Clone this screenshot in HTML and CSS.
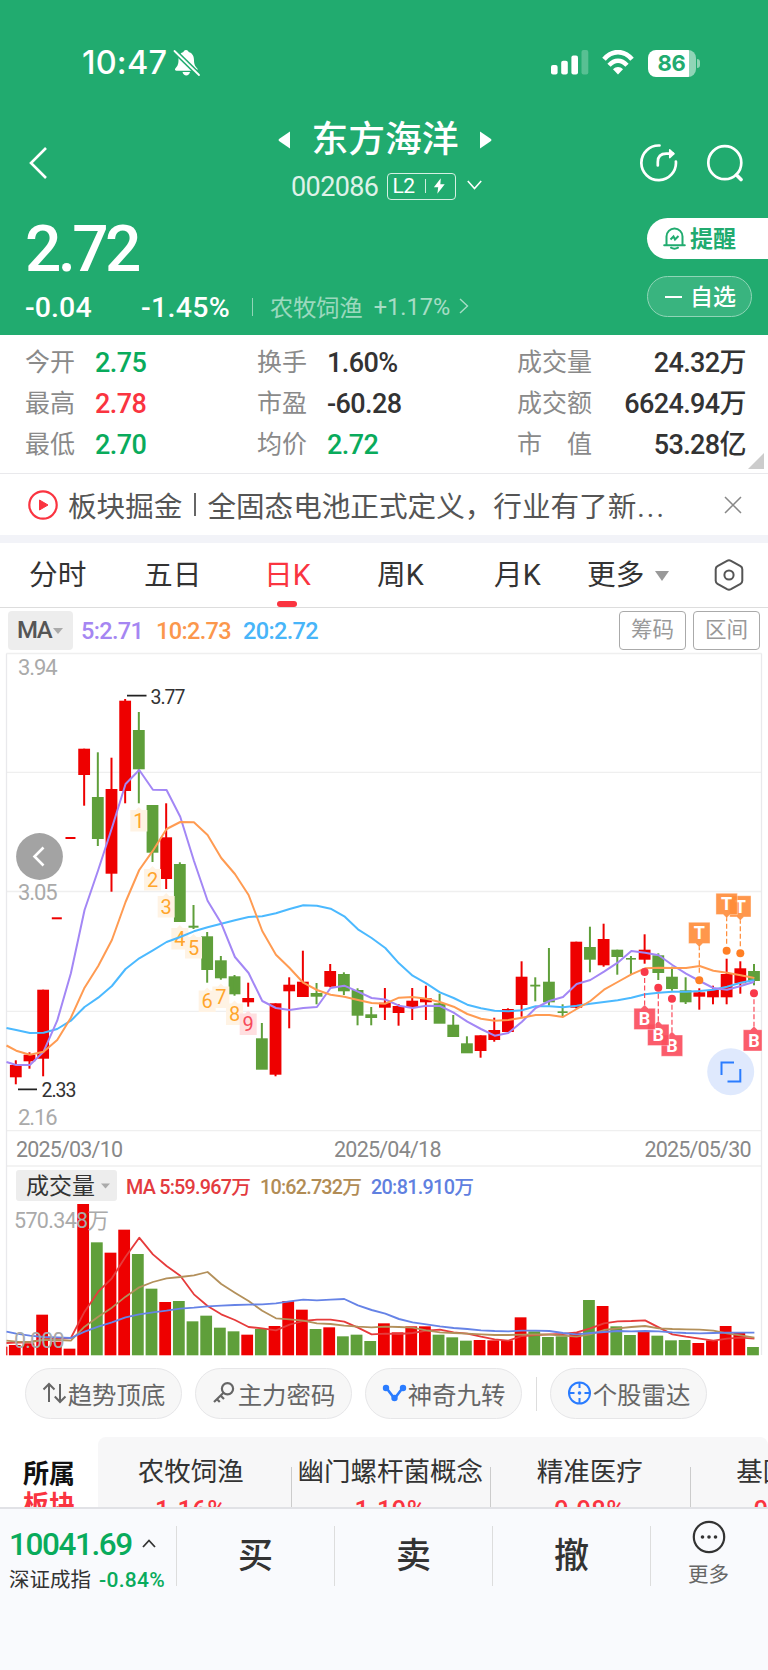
FILE: index.html
```html
<!DOCTYPE html>
<html lang="zh-CN">
<head>
<meta charset="utf-8">
<title>东方海洋 002086</title>
<link rel="stylesheet" href="styles.css">
</head>
<body>
<div class="app">
  <header class="hero">
    <div class="status">
      <span class="clock">10:47</span>
      <svg class="mute" width="28" height="28" viewBox="0 0 28 28"><path d="M13 1c1.600 0 2.500 1 2.600 2 3.800 1 5.400 4 5.400 8 0 5 1.500 6.500 3.300 8.500.8 1-.2 2.200-1.300 2.200H3.500c-1.300 0-2-1.200-1.200-2.200C4 17.500 5.500 16 5.500 11c0-4 1.500-7 5-8C10.600 2 11.400 1 13 1zM9.500 23h7.500c-.5 2.300-1.900 3.500-3.700 3.500S10 25.300 9.500 23z" fill="#fff"/><path d="M2 2.500l23.500 23" stroke="#21ab6f" stroke-width="5"/><path d="M1.500 2l24.500 24" stroke="#fff" stroke-width="1.800" stroke-linecap="round"/></svg>
      <svg class="signal" width="38" height="26" viewBox="0 0 38 26" fill="#fff"><rect x="0" y="15" width="6.600" height="9.500" rx="2"/><rect x="10.200" y="10.800" width="6.600" height="13.700" rx="2"/><rect x="20.400" y="5.500" width="6.600" height="19" rx="2"/><rect x="30.500" y="0" width="6.800" height="24.500" rx="2" opacity=".25"/></svg>
      <svg class="wifi" width="32" height="26" viewBox="0 0 32 26" fill="none" stroke="#fff"><path d="M2 9.300C10-.300 22-.300 30 9.300" stroke-width="4.600"/><path d="M7 15.200c5.500-6 12.500-6 18 0" stroke-width="4.400"/><path d="M16 24.500l-5-5.300c3-2.900 7-2.900 10 0z" fill="#fff" stroke="none"/></svg>
      <span class="battery"><b>86</b></span><i class="battery-tip"></i>
    </div>
    <div class="titlebar">
      <svg class="back" width="22" height="34" viewBox="0 0 22 34"><path d="M19 2L4 17l15 15" fill="none" stroke="#fff" stroke-width="2.600"/></svg>
      <div class="stock">
        <div class="name-row">
          <svg width="13" height="18" viewBox="0 0 13 18"><path d="M12 .5v17L1 10Q0 9 1 8z" fill="#fff"/></svg>
          <h1>东方海洋</h1>
          <svg width="13" height="18" viewBox="0 0 13 18"><path d="M1 .5v17l11-7.500q1-1 0-2z" fill="#fff"/></svg>
        </div>
        <div class="code-row">
          <span class="code">002086</span>
          <span class="level"><span>L2</span><i></i><svg width="13" height="18" viewBox="0 0 15 18"><path d="M9 0L1 10.500h5L5 18l8.500-11H8.500z" fill="#fff"/></svg></span>
          <svg width="15" height="10" viewBox="0 0 15 10"><path d="M.8 1l6.700 7.500L14.200 1" fill="none" stroke="#fff" stroke-width="1.600"/></svg>
        </div>
      </div>
      <div class="actions">
        <svg width="38" height="38" viewBox="0 0 38 38" fill="none" stroke="#fff" stroke-width="2.700" stroke-linecap="round"><path d="M19.500 1.500A17.300 17.300 0 1 0 35.900 17.500"/><path d="M17.800 21.500v-3.500q0-8.300 8.500-8.300H33"/><path d="M29.700 5.800l4.300 3.900-4.300 3.900z" fill="#fff" stroke-width="1.500" stroke-linejoin="round"/></svg>
        <svg width="38" height="38" viewBox="0 0 38 38" fill="none" stroke="#fff" stroke-width="2.700"><circle cx="18.800" cy="18.700" r="16.500"/><path d="M30.500 31l4.500 4.500" stroke-width="3.600" stroke-linecap="round"/></svg>
      </div>
    </div>
    <div class="quote">
      <div class="quote-main">
        <div class="price">2.72</div>
        <div class="change-row">
          <span class="chg">-0.04</span><span class="pct">-1.45%</span><i></i>
          <span class="sector">农牧饲渔</span><span class="sector-pct">+1.17%</span>
          <svg width="10" height="16" viewBox="0 0 10 16"><path d="M1 1l7.500 7L1 15" fill="none" stroke="#fff" stroke-width="1.400" opacity=".6"/></svg>
        </div>
      </div>
      <div class="quote-side">
        <div class="btn-alert">
          <svg width="23" height="23" viewBox="0 0 23 23" fill="none" stroke="#21ab6f" stroke-width="2"><path d="M3.500 18V9.500a8 8 0 0 1 16 0V18M1.200 18.200h20.600M8 20.700q3.500 2 7 0" stroke-linecap="round"/><path d="M7.500 12.500l3-3 1.500 3 3.500-3.500"/></svg>
          <span>提醒</span>
        </div>
        <div class="btn-fav"><i></i><span>自选</span></div>
      </div>
    </div>
  </header>

  <section class="stats">
    <div class="stat-col col-a">
      <p><label>今开</label><b class="down">2.75</b></p>
      <p><label>最高</label><b class="up">2.78</b></p>
      <p><label>最低</label><b class="down">2.70</b></p>
    </div>
    <div class="stat-col col-b">
      <p><label>换手</label><b>1.60%</b></p>
      <p><label>市盈</label><b>-60.28</b></p>
      <p><label>均价</label><b class="down">2.72</b></p>
    </div>
    <div class="stat-col col-c">
      <p><label>成交量</label><b>24.32万</b></p>
      <p><label>成交额</label><b>6624.94万</b></p>
      <p><label>市　值</label><b>53.28亿</b></p>
    </div>
    <i class="corner"></i>
  </section>

  <section class="news">
    <svg width="30" height="30" viewBox="0 0 30 30"><circle cx="15" cy="15" r="13.700" fill="none" stroke="#fa3440" stroke-width="2.200"/><path d="M11.500 10v10l8.500-5z" fill="#fa3440" stroke="#fa3440" stroke-linejoin="round"/></svg>
    <span class="news-tag">板块掘金</span><i></i><span class="news-text">全固态电池正式定义，行业有了新<em>...</em></span>
    <svg class="close" width="18" height="18" viewBox="0 0 18 18"><path d="M1 1l16 16M17 1L1 17" stroke="#888" stroke-width="1.500"/></svg>
  </section>

  <nav class="tabs">
    <span class="t1">分时</span><span class="t2">五日</span><span class="t3 active">日K</span><span class="t4">周K</span><span class="t5">月K</span>
    <span class="t6">更多<i></i></span>
    <svg width="30" height="32" viewBox="0 0 30 32" fill="none" stroke="#555" stroke-width="2"><path d="M13 1.800q2-1 4 0l9.500 5.400q1.800 1 1.800 3v11.600q0 2-1.800 3L17 30.200q-2 1-4 0l-9.500-5.400q-1.800-1-1.800-3V10.200q0-2 1.800-3z"/><circle cx="15" cy="16" r="4.600"/></svg>
  </nav>

  <div class="ma-row">
    <span class="ma-select">MA<i></i></span>
    <span class="ma5">5:2.71</span><span class="ma10">10:2.73</span><span class="ma20">20:2.72</span>
    <span class="ghost first">筹码</span><span class="ghost">区间</span>
  </div>

  <svg class="chart" id="chart" width="768" height="706" viewBox="0 652 768 706"></svg>

  <div class="tools">
    <span class="pill"><svg width="25" height="24" viewBox="0 0 25 24" fill="none" stroke="#666" stroke-width="2"><path d="M7 21V3M1.500 8.500L7 3l5.500 5.500M18 3v18M12.800 15.500L18 21l5.500-5.500"/></svg>趋势顶底</span>
    <span class="pill"><svg width="25" height="24" viewBox="0 0 25 24" fill="none" stroke="#666" stroke-width="2.200"><circle cx="15.500" cy="7.700" r="5.600"/><path d="M11.500 11.700L2 21M8.500 14.500l3.500 3.500M4.800 18l3 3"/></svg>主力密码</span>
    <span class="pill"><svg width="25" height="24" viewBox="0 0 25 24" fill="none" stroke="#2a7cff" stroke-width="2.600"><path d="M4 6.500l8.500 11L21 6.500"/><g fill="#2a7cff" stroke="none"><circle cx="4" cy="7" r="3.200"/><circle cx="21" cy="7" r="3.200"/><circle cx="12.500" cy="17" r="3.200"/></g></svg>神奇九转</span>
    <i class="sep"></i>
    <span class="pill"><svg width="25" height="24" viewBox="0 0 25 24" fill="none" stroke="#2a7cff" stroke-width="2"><circle cx="12.500" cy="12" r="10.500"/><path d="M12.500 1v6M12.500 17v6M1.500 12h6M17.500 12h6"/><circle cx="12.500" cy="12" r="1.800" fill="#2a7cff" stroke="none"/></svg>个股雷达</span>
  </div>

  <section class="blocks">
    <div class="blocks-label"><span>所属</span><span class="up">板块</span></div>
    <div class="blocks-list">
      <div class="block"><span>农牧饲渔</span><b>1.16%</b></div>
      <div class="block"><span>幽门螺杆菌概念</span><b>1.19%</b></div>
      <div class="block"><span>精准医疗</span><b>0.98%</b></div>
      <div class="block"><span>基因测序</span><b>0.98%</b></div>
    </div>
  </section>

  <footer class="bar">
    <div class="index">
      <div class="index-top"><b>10041.69</b><svg width="14" height="9" viewBox="0 0 14 9"><path d="M1 8l6-6.500L13 8" fill="none" stroke="#333" stroke-width="1.800"/></svg></div>
      <div class="index-sub"><span>深证成指</span><em>-0.84%</em></div>
    </div>
    <div class="trade">买</div>
    <div class="trade">卖</div>
    <div class="trade">撤</div>
    <div class="more">
      <svg width="34" height="34" viewBox="0 0 34 34"><circle cx="17" cy="17" r="15.200" fill="none" stroke="#333" stroke-width="2.200"/><g fill="#333"><circle cx="10.500" cy="17" r="1.800"/><circle cx="17" cy="17" r="1.800"/><circle cx="23.500" cy="17" r="1.800"/></g></svg>
      <span>更多</span>
    </div>
  </footer>
</div>
<script src="chart.js"></script>
</body>
</html>
```
FILE: styles.css
```css
* { box-sizing: border-box; }
body { margin: 0; background: #fff; }
.app {
  width: 768px; height: 1670px; overflow: hidden; display: flex; flex-direction: column;
  font-family: Roboto, "Noto Sans CJK SC", sans-serif; color: #333; white-space: nowrap;
}
.app > * { flex: none; }
i, em { font-style: normal; }
p, h1 { margin: 0; font-weight: 400; }
svg { display: block; flex: none; }
.up { color: #fa3440; }
.down { color: #09ab5c; }

.hero { height: 335px; background: #21ab6f; color: #fff; }
.status { height: 112px; padding: 14px 68px 0 82px; display: flex; align-items: center; }
.clock { font: 500 32.500px/40px Inter, sans-serif; letter-spacing: .2px; width: 91px; }
.signal { margin-left: auto; margin-right: 13px; }
.wifi { margin-right: 14px; }
.battery {
  width: 48px; height: 27px; border-radius: 8px; display: flex; justify-content: center; align-items: center;
  background: linear-gradient(90deg, #fff 86%, #90d5b7 86%); color: #21ab6f;
}
.battery b { font: 700 22px/27px Inter, sans-serif; letter-spacing: -.3px; }
.battery-tip { width: 3px; height: 9px; margin-left: 1.500px; border-radius: 0 3px 3px 0; background: #8dd4b4; }

.titlebar { height: 104px; display: flex; padding: 0 24px 0 27px; justify-content: space-between; }
.back { margin-top: 34px; }
.stock { width: 230px; margin-left: 81px; padding-top: 1px; }
.name-row { height: 54px; display: flex; align-items: center; justify-content: center; gap: 20px; }
.name-row h1 { font-size: 36.800px; font-weight: 500; line-height: 54px; }
.code-row { display: flex; align-items: center; gap: 9px; margin-left: 21px; height: 38px; }
.code-row > svg { margin-left: 2px; margin-top: -2px; }
.code { font-size: 27px; letter-spacing: -.6px; opacity: .85; padding-top: 1px; }
.level {
  width: 69px; height: 27px; border: 1.500px solid #d5f0e3; border-radius: 4px; display: flex; align-items: center;
  justify-content: space-between; padding: 0 9px 0 4px; font-size: 21px; letter-spacing: -.5px;
}
.level i { width: 1px; height: 14px; background: #cdeede; margin-left: 2px; }
.actions { display: flex; gap: 28px; margin-top: 32px; }

.quote { height: 119px; display: flex; justify-content: space-between; }
.quote-main { padding-left: 25px; }
.price { font-size: 64px; font-weight: 500; line-height: 68px; letter-spacing: -3.500px; }
.change-row { height: 40px; margin-top: 3px; display: flex; align-items: center; }
.chg, .pct { font-weight: 500; font-size: 28.500px; letter-spacing: .1px; }
.chg { width: 116px; }
.pct { width: 111px; letter-spacing: .3px; }
.change-row i { width: 1px; height: 18px; background: #90d5b7; }
.sector { font-size: 23.200px; margin-left: 17px; opacity: .55; margin-top: -2px; }
.sector-pct { font-size: 23.500px; margin: -1px 9px 0 11px; opacity: .6; }
.change-row svg { margin-top: -2px; }
.quote-side { width: 121px; padding-top: 2px; }
.btn-alert { height: 41px; background: #fff; border-radius: 21px 0 0 21px; color: #21ab6f; display: flex; align-items: center; padding-left: 16px; gap: 4px; font-size: 23px; font-weight: 700; }
.btn-fav { width: 105px; height: 41px; margin-top: 17px; border: 1px solid #90d5b7; border-radius: 21px; background: #39b47f; display: flex; align-items: center; padding-left: 17px; gap: 8px; font-size: 23px; font-weight: 500; }
.btn-alert span, .btn-fav span { margin-top: -3px; }
.btn-fav i { width: 17px; height: 2px; background: #fff; }

.stats { height: 139px; border-bottom: 1.500px solid #e9e9ec; padding: 7px 22px 0 25px; display: flex; position: relative; }
.stat-col p { height: 41px; display: flex; align-items: center; }
.stat-col label { font-size: 25px; color: #8a8a8a; line-height: 41px; }
.stat-col b { font-size: 27px; font-weight: 500; line-height: 41px; letter-spacing: -.6px; margin-top: 1px; }
.col-a { width: 232px; }
.col-a b, .col-b b { margin-left: 20px; }
.col-b { width: 260px; }
.col-c { flex: 1; }
.col-c p { justify-content: space-between; }
.corner { position: absolute; right: 4px; bottom: 4px; border: 8px solid transparent; border-right-color: #ccc; border-bottom-color: #ccc; }

.news { height: 69px; border-bottom: 8px solid #f2f3f8; padding: 0 26px 0 28px; display: flex; align-items: center; font-size: 28.600px; color: #555; }
.news span { margin-top: -1px; }
.news-tag { margin-left: 10px; }
.news i { width: 2px; height: 23px; background: #666; margin: 0 11px 0 12px; }
.news em { letter-spacing: 2px; margin-left: 1px; }
.close { margin-left: auto; }

.tabs { height: 65px; border-bottom: 1px solid #ddd; display: grid; grid-template-columns: 115px 120px 113px 117px 93px 127px 30px; padding-left: 29px; align-items: center; font-size: 28.700px; color: #333; }
.tabs span { position: relative; line-height: 64px; }
.tabs .active { color: #fa3440; }
.active::after { content: ""; position: absolute; left: 13px; bottom: 0; width: 20px; height: 6px; border-radius: 3px; background: #fa3440; }
.tabs .t6 { display: flex; align-items: center; gap: 11px; }
.t6 i { border: 7px solid transparent; border-top: 10px solid #999; border-bottom: 0; margin-top: 2px; }

.ma-row { height: 44px; padding: 3px 8px 0; display: flex; align-items: flex-start; line-height: 39px; font-size: 23.500px; }
.ma-select { width: 65px; height: 39px; border-radius: 4px; background: #ededed; color: #555; padding-left: 9px; display: flex; align-items: center; font-size: 24px; font-weight: 500; letter-spacing: -1.500px; }
.ma-select i { border: 5px solid transparent; border-top: 6px solid #aaa; border-bottom: 0; margin-left: 2px; }
.ma5, .ma10, .ma20 { letter-spacing: -.65px; font-weight: 500; padding-top: 1px; }
.ma5 { color: #a586f2; margin-left: 8px; width: 75px; }
.ma10 { color: #fb974c; width: 87px; }
.ma20 { color: #48b5f9; }
.ghost { width: 67px; height: 39px; border: 1.500px solid #aaa; border-radius: 4px; text-align: center; line-height: 36px; font-size: 21.500px; color: #999; margin-left: 7px; }
.ghost.first { margin-left: auto; }

.chart text { font-family: Roboto, "Noto Sans CJK SC", sans-serif; }

.tools { height: 79px; padding: 10px 0 0 25px; display: flex; gap: 13px; }
.pill { width: 157px; height: 51px; border: 1.500px solid #e6e6e8; border-radius: 26px; background: #f7f7f7; display: flex; align-items: center; justify-content: center; gap: 1px; font-size: 24.400px; color: #666; padding-bottom: 1px; }
.sep { width: 1px; height: 34px; background: #ddd; margin: 9px 0 0 1px; }

.blocks { height: 70px; overflow: hidden; display: flex; }
.blocks-label { width: 98px; padding: 22px 0 0 23px; display: flex; flex-direction: column; font-size: 26px; font-weight: 700; line-height: 31px; color: #111; }
.blocks-label .up { color: #fa3440; }
.blocks-list { width: 670px; height: 120px; background: #f7f7f8; border-radius: 8px; display: flex; overflow: hidden; }
.block { flex: none; width: 199.500px; padding-top: 15px; display: flex; flex-direction: column; align-items: center; position: relative; font-size: 26.500px; line-height: 40px; left: -7px; }
.block:not(:last-child)::after { content: ""; position: absolute; right: -1px; top: 30px; width: 1px; height: 60px; background: #ccc; }
.block b { color: #fa3440; font-weight: 500; font-size: 25.500px; line-height: 36px; letter-spacing: .4px; }

.bar { height: 164px; background: #f9fafd; border-top: 2px solid #e1e2e6; display: flex; padding-top: 17px; }
.index { width: 176px; padding-left: 9px; }
.index-top { display: flex; align-items: center; gap: 10px; height: 37px; }
.index-top b { font-size: 31.500px; font-weight: 500; letter-spacing: -1.400px; color: #09ab5c; }
.index-top svg { margin-top: -3px; }
.index-sub { display: flex; align-items: center; gap: 8px; font-size: 20.500px; line-height: 34px; }
.index-sub em { color: #09ab5c; font-size: 21px; letter-spacing: .3px; font-weight: 500; }
.trade { width: 158px; height: 60px; border-left: 1px solid #ddd; text-align: center; line-height: 62px; font-size: 35px; font-weight: 500; }
.more { flex: 1; height: 60px; border-left: 1px solid #ddd; display: flex; flex-direction: column; align-items: center; font-size: 20.500px; line-height: 30px; color: #666; padding-right: 2px; }
.more svg { margin-top: -6px; margin-bottom: 6px; }
```
FILE: chart.js
```js
const NS = 'http://www.w3.org/2000/svg';
const chart = document.getElementById('chart');
const RED = '#ee0000', GREEN = '#5f9f3a';
const STEP = 13.67, X0 = 15.8;
const cx = i => X0 + i * STEP;

function add(tag, attrs, text) {
  const n = document.createElementNS(NS, tag);
  for (const k in attrs) n.setAttribute(k, attrs[k]);
  if (text !== undefined) n.textContent = text;
  chart.appendChild(n);
  return n;
}
const hline = y => add('path', { d: `M6.500 ${y}H761.500`, stroke: '#efefef', 'stroke-width': 1.300 });
function label(x, y, text, size, fill, len, extra) {
  const a = Object.assign({ x, y, 'font-size': size, fill }, extra || {});
  if (len) { a.textLength = len; }
  return add('text', a, text);
}

[653.5, 772.3, 891.5, 1011.3, 1130.700, 1166].forEach(hline);
add('path', { d: 'M6.500 653.500V1355M761.500 653.500V1355', stroke: '#e9e9ec', 'stroke-width': 1.300 });

label(18, 675, '3.94', 22, '#aaa', 39.500);
label(18, 900, '3.05', 22, '#aaa', 39.500);
label(18, 1125, '2.16', 22, '#aaa', 39.500);

// [direction, body top, body bottom, high, low]
const candles = [
  ['r',1065,1077.3,1060.3,1084.3],['r',1054.7,1061.3,1052.3,1068.7],['r',989.7,1058.7,989.7,1076.3],
  ['f',917.3,919.3,918,918],['f',837,839,838,838],['r',748.7,775,748.7,805.7],['g',797,839,752.3,846],
  ['r',789,873.7,757.7,891.7],['r',700.7,791,699,803.3],['g',730,769.3,712,803.3],['g',805,852.7,805,862],
  ['r',837.3,879,803.3,889],['g',864,922,862.3,922],['g',925.7,927.7,905,929],['g',936.3,970,932,982.7],
  ['g',960.3,978.3,956,979.7],['g',976.3,994.3,975,995.7],['r',998,1002.3,982.7,1006.7],['g',1038.3,1069.7,1023,1069],
  ['r',1003.3,1074.7,1003.3,1076.3],['r',984.7,991.3,977.3,1028.3],['r',981.7,997,950.7,997],['g',993,996.7,983,1004.3],
  ['r',971,986.7,964,987.3],['g',974,991.3,972.3,995],['g',990,1015.7,988.3,1025.3],['g',1014.3,1018,1007,1025.3],
  ['r',1002.7,1007.7,988,1020],['r',1006,1013,1004,1025.7],['r',1000.7,1007.3,988,1020],['r',998.3,1002.3,985.7,1020],
  ['g',1003.3,1023.7,993.7,1023],['g',1024.7,1037,1015,1037],['g',1043.3,1053.3,1036.3,1053],['r',1035.3,1051,1035.3,1057.7],
  ['r',1030,1040,1017.7,1041.7],['r',1009,1032,1008.3,1032],['r',976.7,1005,961.3,1016.7],['g',984.7,986.5,977.3,1001.3],
  ['g',981.7,1002.3,948,1005.7],['g',1011.3,1013,1004.3,1016],['r',941.7,1007.7,941.7,1008.3],['g',947,959.7,926.7,972.3],
  ['r',939,965.3,923.7,966.7],['g',949.7,957,949.7,974.7],['g',958,959.6,956,974.3],['r',949.7,959.7,934.3,963.7],
  ['g',955.3,973,953.3,980],['g',976.7,989,966.7,990.7],['g',990.3,1002.3,977.3,1004],['r',992.3,996.7,988.3,1009.7],
  ['r',990,997.3,985.7,1004.3],['r',974,997.3,958.7,1004.3],['r',968.3,983.3,961.3,993.7],['g',971,981,964,985.3]
];
candles.forEach(([d, top, bot, hi, lo], i) => {
  const fill = d === 'g' ? GREEN : RED, thin = bot - top < 2.100, w = thin ? 10 : 11.800;
  add('rect', { x: cx(i) - w / 2, y: top, width: w, height: bot - top, fill });
  if (lo > hi) add('path', { d: `M${cx(i)} ${hi}V${lo}`, stroke: fill, 'stroke-width': 2 });
});

function line(startY, ys, color, x0, width) {
  const pts = [`6.500,${startY}`].concat(ys.map((y, i) => `${x0 + i * STEP},${y}`));
  add('polyline', { points: pts.join(' '), fill: 'none', stroke: color, 'stroke-width': width, 'stroke-linejoin': 'round' });
}

// Nine-turn sequence badges: [candle index, digit, top of box]
[[9,1,810],[10,2,869],[11,3,896],[12,4,928],[13,5,937],[14,6,990.5],[15,7,986.5],[16,8,1003.5],[17,9,1013.5]].forEach(([i, n, y]) => {
  const x = cx(i), hot = n === 9;
  add('path', { d: `M${x-8.500} ${y}H${x-3}L${x} ${y-3}L${x+3} ${y}H${x+8.500}V${y+21.500}H${x-8.500}z`, fill: hot ? '#ffdfe0' : '#fff3e4' });
  label(x, y + 17.500, n, 20, hot ? '#f74a5a' : '#ffa52c', 0, { 'text-anchor': 'middle' });
});

line(1028, [1030,1033,1032.7,1029,1020.7,1007,997.7,986,969,958.3,950.3,942,937,931.3,927.3,923.7,920.3,917,916.3,913.3,909,905.3,905.7,908.7,916.3,929.3,938,948,963.3,975.7,983.3,992.3,998,1004.7,1008.3,1010.7,1011.3,1010.3,1006.3,1006.3,1007.3,1005.7,1003.7,1002,1000.3,997.7,994.3,992.7,991.7,991.7,991,989.7,986.7,982.7,980], '#4bb9ff', X0 + .4, 2);
line(1062, [1065,1065,1051.7,1020.7,973.3,910,870,828,784,770,789.7,790,816.7,860.7,900.7,923.3,957,973,1001,1008,1010,1008,1007,988,985.7,991.7,998,999.5,1005.7,1008,1005.7,1006,1012.7,1021.7,1029,1035.7,1033,1021.7,1008,1001,997,984,980,971.7,962.7,951,952.7,955.3,965,973.7,981,988,989.7,986,981.7], '#a387f5', X0 + .4, 2);
line(1045.500, [1050.7,1054.7,1051.7,1040,1017.7,987.7,966,940,902,870,850.7,829,822,822.3,835,858,874,895,931,954.7,968,982.7,990,994.7,996.7,1000,1003,1003.7,997.7,997,998.7,1002,1006.7,1014,1018.7,1020.7,1020,1017.7,1015,1015,1017,1009,1001,989.7,982,974.3,968.3,967.7,968,968,966,970.7,972.7,975.3,978], '#ff9b52', X0 + .4, 2);

add('path', { d: 'M127 695.700H146.500M18 1089.300H37', stroke: '#222', 'stroke-width': 1.700 });
label(150.500, 703.500, '3.77', 19.500, '#333', 35);
label(41.500, 1097, '2.33', 19.500, '#333', 35);

// Trade markers: [candle index, box top, dot y]
[[50,922.3,980.2],[53,895.700,953.3],[52,893.3,950.700]].forEach(([i, y, dot]) => {
  const x = cx(i);
  add('path', { d: `M${x} ${y+23}V${dot-5}`, stroke: '#ff8a35', 'stroke-width': 1.200, 'stroke-dasharray': '5 2.500' });
  add('circle', { cx: x, cy: dot, r: 4, fill: '#ff7f24' });
  add('path', { d: `M${x-10.700} ${y}H${x+10.700}V${y+21.300}H${x+3.500}L${x} ${y+24.700}L${x-3.500} ${y+21.300}H${x-10.700}z`, fill: '#ff8c39', opacity: .9, stroke: '#fff', 'stroke-width': .4 });
  label(x, y + 17, 'T', 18, '#fff', 0, { 'text-anchor': 'middle', 'font-weight': 700 });
});
[[48,1035,998.700],[47,1024.3,987.700],[46,1008.3,972],[54,1029.700,993.3]].forEach(([i, y, dot]) => {
  const x = cx(i), r = Math.min(x + 10.700, 762);
  add('path', { d: `M${x} ${dot+6}V${y-3}`, stroke: '#fa4a5a', 'stroke-width': 1.200, 'stroke-dasharray': '5 2.500' });
  add('circle', { cx: x, cy: dot, r: 4, fill: '#f9394a' });
  add('path', { d: `M${x-10.700} ${y}H${x-3.500}L${x} ${y-3.500}L${x+3.500} ${y}H${r}V${y+21.300}H${x-10.700}z`, fill: '#fb4f5f', opacity: .92, stroke: '#fff', 'stroke-width': .4 });
  label(x, y + 17, 'B', 18, '#fff', 0, { 'text-anchor': 'middle', 'font-weight': 700 });
});

add('circle', { cx: 39.500, cy: 856.500, r: 23.400, fill: '#a3a3a3' });
add('path', { d: 'M43.500 847.500L34.500 856.500L43.500 865.500', fill: 'none', stroke: '#fff', 'stroke-width': 2.600 });
add('circle', { cx: 730.700, cy: 1071.700, r: 23.500, fill: '#dfe9fd' });
add('path', { d: 'M734 1062.500H721.500V1075M740.300 1069V1081.500H727.500', fill: 'none', stroke: '#2a7cff', 'stroke-width': 2 });

label(16, 1157, '2025/03/10', 21.500, '#888', 107);
label(334, 1157, '2025/04/18', 21.500, '#888', 107.500);
label(644.500, 1157, '2025/05/30', 21.500, '#888', 107);

// Volume panel
add('rect', { x: 16, y: 1170, width: 101, height: 31, rx: 3, fill: '#ededed' });
label(26, 1193.500, '成交量', 23, '#333');
add('path', { d: 'M101 1183.500h9l-4.500 5z', fill: '#aaa' });
label(126, 1194, 'MA 5:59.967万', 19.800, '#e33b3f', 125, { 'font-weight': 500 });
label(260, 1194, '10:62.732万', 19.800, '#b18c55', 102, { 'font-weight': 500 });
label(371, 1194, '20:81.910万', 19.800, '#6080e0', 103, { 'font-weight': 500 });

const volumes = 'r555 r550 r464 r545 r566 r132 g247 r278 r209 g282 g386 r426 g423 g484 g467 g503 g514 r524 g507 r498 r423 r449 g507 r502 g529 g524 g543 r490 r517 r499 r499 g524 g532 g542 r540 r541 r541 r472 g514 g531 g529 r518 g420 r438 g499 g525 r514 g527 g541 g540 r549 r541 r498 r519 g561'.split(' ');
const vy = v => 1160 + v / 3;
add('rect', { x: 6.200, y: vy(560), width: 1.200, height: 1355.300 - vy(560), fill: RED });
volumes.forEach((v, i) => {
  const y = vy(+v.slice(1));
  add('rect', { x: 8.900 + i * STEP, y, width: 11.800, height: 1355.300 - y, fill: v[0] === 'g' ? GREEN : RED });
});
const VX = 16.200;
line(vy(549), [548,547,537,536,534,455,395,355,290,233,283,318,347,403,438,463,480,501,505,511,494,483,479,479,485,503,523,521,522,519,512,509,517,521,530,538,542,528,525,523,522,517,505,490,484,483,481,502,523,530,536,542,536,533,536].map(vy), '#e63b3b', VX, 1.800);
line(vy(542), [545,546,540,540,542,500,470,443,410,382,366,355,351,346,336,372,398,423,452,475,478,482,490,492,497,500,502,500,501,503,511,517,519,521,523,525,525,524,523,524,527,530,523,510,505,501,498,505,507,508,509,512,520,526,533].map(vy), '#b3905b', VX, 1.800);
line(vy(515), [521,527,531,532,534,515,500,487,472,463,457,452,446,443,439,437,435,434,433,430,424,419,421,419,417,436,450,461,477,487,493,499,504,507,511,513,514,512,512,513,519,523,519,516,513,514,513,514,517,519,520,519,518,518,518].map(vy), '#6683e6', VX, 1.900);
label(14, 1227.700, '570.348万', 21.500, '#aaa', 95);
label(14, 1347.500, '0.000', 21.500, '#aaa', 50.500);
```
